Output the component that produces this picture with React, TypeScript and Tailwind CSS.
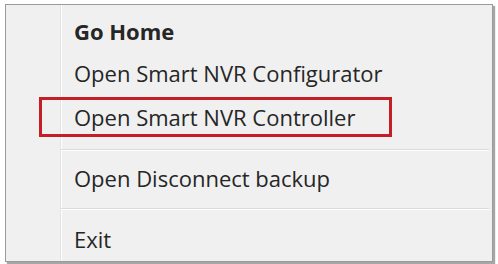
import React from 'react'

const font = { fontFamily: '"Open Sans", "Noto Sans", sans-serif' }

const MenuItem = ({ label, bold }: { label: string; bold?: boolean }) => (
  <div
    className={`h-[42px] flex items-center pl-[13px] text-[22px] text-[#262626] ${bold ? 'font-bold' : ''}`}
  >
    {label}
  </div>
)

const Separator = ({ pt }: { pt: string }) => (
  <div className={`h-[20px] pr-[3px] ${pt}`}>
    <div className="h-px bg-[#dcdcdc]" />
    <div className="h-px bg-white" />
  </div>
)

export default function App() {
  return (
    <div className="w-[498px] h-[264px] bg-white pt-[4px] pl-[5px]" style={font}>
      <div className="w-[488px] h-[258px] flex border border-[#9a9a9a] bg-[#f0f0f0] shadow-[2px_2px_1px_rgba(0,0,0,0.35)]">
        <div className="w-[55px] shrink-0 border-r border-[#e2e3e3] shadow-[1px_0_0_#ffffff]" />
        <div className="flex-1 flex flex-col pt-[5px]">
          <MenuItem label="Go Home" bold />
          <MenuItem label="Open Smart NVR Configurator" />
          <div className="mt-[3px] -ml-[22px] w-[353px] h-[40px] flex items-center pl-[32px] border-[3px] border-[#c41e26] text-[22px] text-[#262626]">
            Open Smart NVR Controller
          </div>
          <Separator pt="pt-[12px]" />
          <MenuItem label="Open Disconnect backup" />
          <Separator pt="pt-[9px]" />
          <div className="h-[40px] flex items-center pl-[13px] text-[22px] text-[#262626]">
            Exit
          </div>
        </div>
      </div>
    </div>
  )
}
